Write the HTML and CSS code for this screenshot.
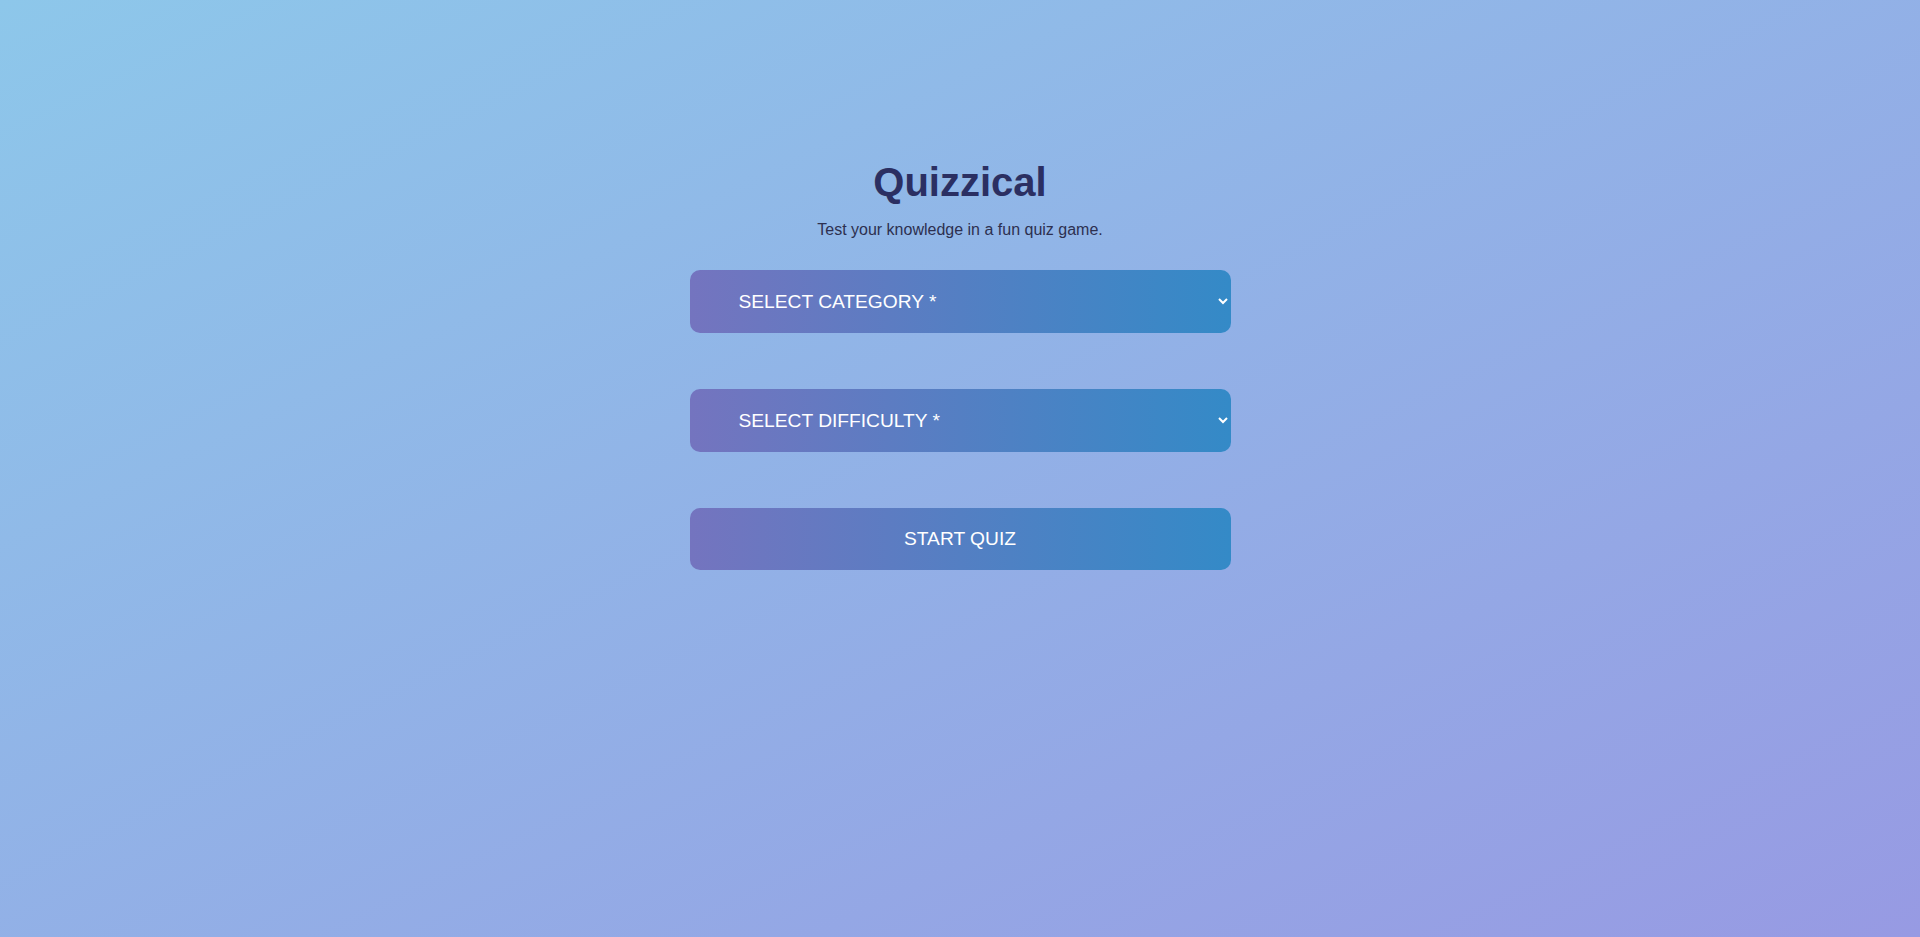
FILE: index.html
```html
<!DOCTYPE html>
<html lang="en">
<head>
<meta charset="utf-8">
<title>Quizzical</title>
<link rel="stylesheet" href="styles.css">
</head>
<body>
<main class="start">
  <h1 class="start__title">Quizzical</h1>
  <p class="start__subtitle">Test your knowledge in a fun quiz game.</p>
  <form class="start__form">
    <select class="field" required>
      <option value="">SELECT CATEGORY *</option>
      <option>General Knowledge</option>
      <option>Science</option>
    </select>
    <select class="field" required>
      <option value="">SELECT DIFFICULTY *</option>
      <option>Easy</option>
      <option>Medium</option>
      <option>Hard</option>
    </select>
    <button type="submit" class="btn">START QUIZ</button>
  </form>
</main>
</body>
</html>
```
FILE: styles.css
```css
html, body {
  margin: 0;
  padding: 0;
  min-height: 100%;
}
body {
  min-height: 937px;
  font-family: "Liberation Sans", Arial, sans-serif;
  background: linear-gradient(to bottom right, #8dc7ea, #979ae3);
}
.start {
  width: 541px;
  margin: 0 auto;
  padding-top: 160px;
  display: flex;
  flex-direction: column;
  align-items: stretch;
  text-align: center;
}
.start__title {
  margin: 0;
  font-size: 40px;
  font-weight: 700;
  color: #2b2f62;
}
.start__subtitle {
  margin: 16px 0 0;
  font-size: 16px;
  color: #2d3050;
}
.start__form {
  margin-top: 31px;
  display: flex;
  flex-direction: column;
  gap: 56px;
}
.field,
.btn {
  height: 63px;
  border: none;
  border-radius: 10px;
  background: linear-gradient(to right, #7474bf, #348ac7);
  color: #fff;
  font-family: "Liberation Sans", Arial, sans-serif;
  font-size: 19.2px;
  outline: none;
}
.field {
  padding: 0 4px 0 45px;
}
.field option {
  color: #000;
  background: #fff;
}
.btn {
  height: 62px;
  cursor: pointer;
}
```
